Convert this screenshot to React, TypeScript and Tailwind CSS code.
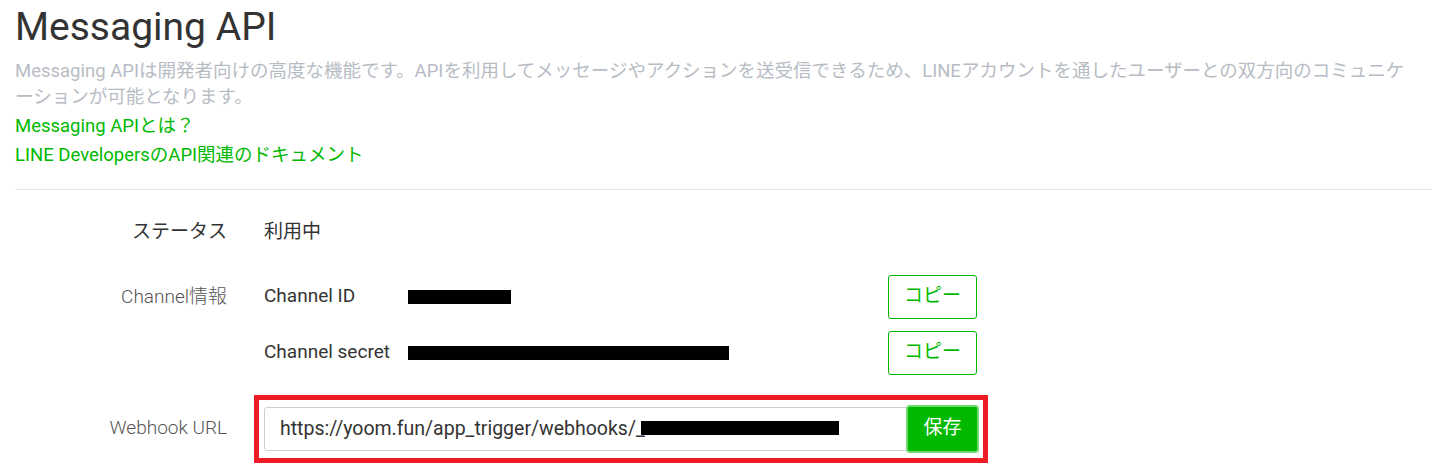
import React from 'react';

const Redacted = ({ width }: { width: number }) => (
  <span className="inline-block h-[14px] bg-black" style={{ width }} />
);

const CopyButton = () => (
  <button className="w-[89px] h-[44px] border border-[#00b900] rounded-[3px] text-[#00b900] text-[19px] bg-white">
    コピー
  </button>
);

export default function App() {
  return (
    <div
      className="w-[1432px] h-[466px] bg-white overflow-hidden pl-[15px]"
      style={{ fontFamily: 'Roboto, "Noto Sans CJK JP", sans-serif' }}
    >
      <h1 className="text-[39px] leading-[54px] text-[#333]">Messaging API</h1>
      <p className="mt-[4px] text-[18.5px] leading-[26px] text-[#b7bcc4] pr-[10px]">
        Messaging APIは開発者向けの高度な機能です。APIを利用してメッセージやアクションを送受信できるため、LINEアカウントを通したユーザーとの双方向のコミュニケーションが可能となります。
      </p>
      <div className="flex flex-col text-[18.5px] leading-[29px] text-[#00b900] mt-[2px]">
        <a>Messaging APIとは？</a>
        <a>LINE DevelopersのAPI関連のドキュメント</a>
      </div>
      <div className="mt-[19px] border-t border-[#e5e5e5]" />

      <div className="mt-[28px] flex items-center">
        <div className="w-[212px] text-right text-[19px] text-[#333]">ステータス</div>
        <div className="ml-[37px] text-[19px] text-[#333]">利用中</div>
      </div>

      <div className="mt-[28px] flex items-start">
        <div className="w-[212px] text-right text-[19px] text-[#555] font-light pt-[8px]">Channel情報</div>
        <div className="ml-[37px] flex flex-col gap-[12px]">
          <div className="flex items-center h-[44px]">
            <div className="w-[144px] text-[19px] text-[#333]">Channel ID</div>
            <Redacted width={103} />
            <div className="pl-[377px]">
              <CopyButton />
            </div>
          </div>
          <div className="flex items-center h-[44px]">
            <div className="w-[144px] text-[19px] text-[#333]">Channel secret</div>
            <Redacted width={321} />
            <div className="pl-[159px]">
              <CopyButton />
            </div>
          </div>
        </div>
      </div>

      <div className="mt-[20px] flex items-center">
        <div className="w-[212px] text-right text-[19px] text-[#555] font-light">Webhook URL</div>
        <div className="ml-[27px] border-[5px] border-[#ed1c24] p-[5px] pr-[4px] flex items-center w-[734px]">
          <div className="flex-1 h-[44px] border border-[#ccd0d6] rounded-l-[3px] flex items-center pl-[15px] text-[19.5px] text-[#333]">
            <span>https://yoom.fun/app_trigger/webhooks/_</span>
            <span className="-ml-[4px]">
              <Redacted width={198} />
            </span>
          </div>
          <button className="w-[73px] h-[48px] -ml-[1px] bg-[#00b900] border-2 border-[#6fd86f] rounded-[4px] text-white text-[19px]">
            保存
          </button>
        </div>
      </div>
    </div>
  );
}
